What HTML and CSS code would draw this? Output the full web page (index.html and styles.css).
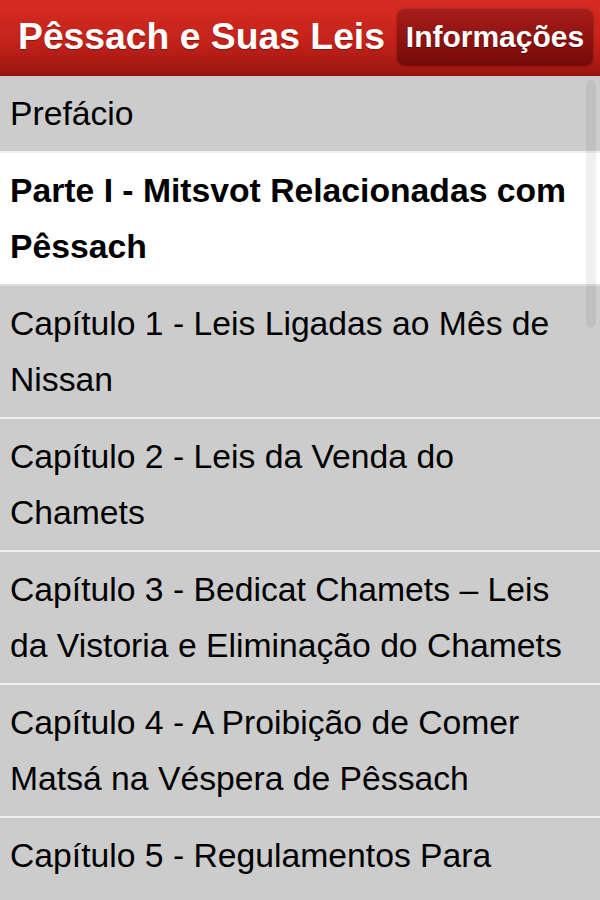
FILE: index.html
```html
<!DOCTYPE html>
<html lang="pt">
<head>
<meta charset="utf-8">
<title>Pêssach e Suas Leis</title>
<link rel="stylesheet" href="styles.css">
</head>
<body>
<header class="topbar">
  <h1 class="title">Pêssach e Suas Leis</h1>
  <button class="info-btn">Informações</button>
</header>
<ul class="toc">
  <li class="item">Prefácio</li>
  <li class="item part">Parte I - Mitsvot Relacionadas com Pêssach</li>
  <li class="item">Capítulo 1 - Leis Ligadas ao Mês de Nissan</li>
  <li class="item">Capítulo 2 - Leis da Venda do Chamets</li>
  <li class="item">Capítulo 3 - Bedicat Chamets – Leis da Vistoria e Eliminação do Chamets</li>
  <li class="item">Capítulo 4 - A Proibição de Comer Matsá na Véspera de Pêssach</li>
  <li class="item">Capítulo 5 - Regulamentos Para</li>
</ul>
<div class="scroll-thumb"></div>
</body>
</html>
```
FILE: styles.css
```css
html, body {
  margin: 0;
  padding: 0;
  height: 100%;
  overflow: hidden;
  background: #cccccc;
  font-family: "Liberation Sans", Arial, sans-serif;
}

.topbar {
  height: 76px;
  display: flex;
  align-items: center;
  justify-content: space-between;
  padding: 0 7px 2px 18px;
  background: linear-gradient(to bottom, #d72b21 0%, #c3231b 55%, #9c1510 100%);
  border-bottom: 1px solid #8a1410;
  box-sizing: border-box;
}

.title {
  margin: 0;
  color: #ffffff;
  font-size: 37.3px;
  font-weight: bold;
  line-height: 1;
  white-space: nowrap;
  text-shadow: 0 1px 1px rgba(80, 0, 0, 0.5);
}

.info-btn {
  height: 57px;
  width: 196px;
  border: none;
  border-radius: 8px;
  background: linear-gradient(to bottom, #a71d19 0%, #8c1210 60%, #740b09 100%);
  box-shadow: 0 1px 2px rgba(60, 0, 0, 0.6), inset 0 1px 0 rgba(255, 255, 255, 0.08);
  color: #ffffff;
  font-family: "Liberation Sans", Arial, sans-serif;
  font-size: 30px;
  font-weight: bold;
  padding: 0;
  text-shadow: 0 1px 1px rgba(40, 0, 0, 0.6);
}

.toc {
  list-style: none;
  margin: 0;
  padding: 0;
}

.item {
  padding: 9px 20px 9px 10px;
  font-size: 33.7px;
  line-height: 56.5px;
  color: #000000;
  background: #cccccc;
  border-bottom: 2px solid #f0f0f0;
}

.item:last-child {
  border-bottom: none;
}

.item.part {
  background: #ffffff;
  font-weight: bold;
  border-bottom-color: #dedede;
}

.scroll-thumb {
  position: fixed;
  top: 80px;
  right: 4px;
  width: 10px;
  height: 248px;
  border-radius: 5px;
  background: rgba(0, 0, 0, 0.06);
}
```
